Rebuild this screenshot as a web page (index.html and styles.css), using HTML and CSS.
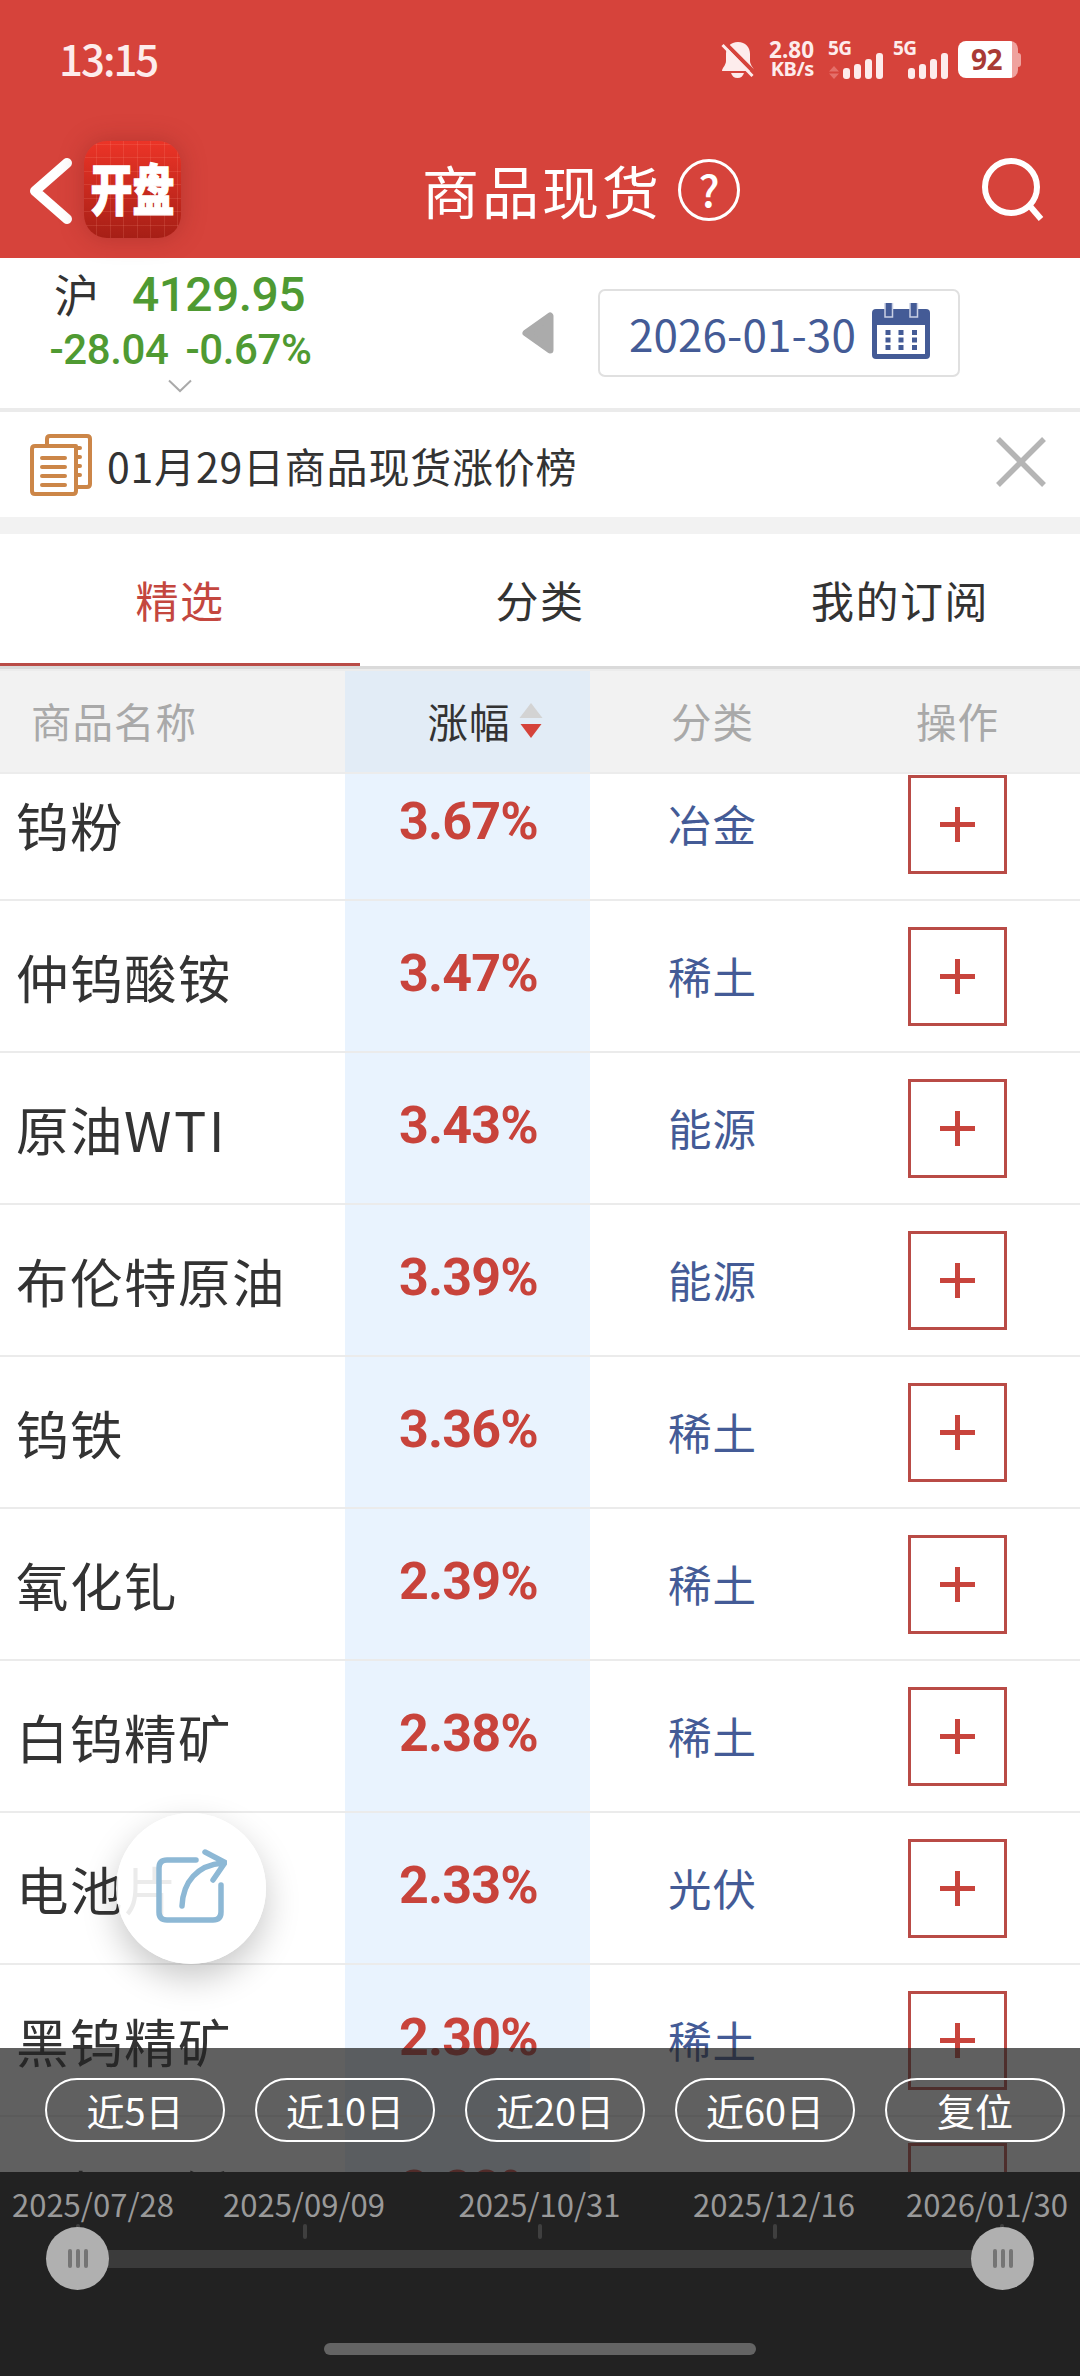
FILE: index.html
```html
<!DOCTYPE html>
<html lang="zh-CN">
<head>
<meta charset="utf-8">
<title>商品现货</title>
<link rel="stylesheet" href="styles.css">
</head>
<body>
<div class="screen">
  <header class="top">
    <div class="status">
      <span class="clock">13:15</span>
      <div class="status-right">
        <svg class="bell" width="34" height="38" viewBox="0 0 34 38"><path d="M17 1C9.500 1 5 6 5 13v7c0 4-4 7-4 10h32c0-3-4-6-4-10v-7C29 6 24.500 1 17 1z" fill="#fdecec"/><path d="M10 32h13c-1 3-3 5-6.500 5S11 35 10 32z" fill="#fdecec"/><path d="M3 1l31 31" stroke="#d6433b" stroke-width="4"/><path d="M1.500 4l30 31" stroke="#fdecec" stroke-width="3"/></svg>
        <div class="rate"><span class="rate-num">2.80</span><span class="rate-unit">KB/s</span></div>
        <div class="signal first"><span class="net">5G</span>
          <svg width="56" height="38" viewBox="0 0 56 38"><path d="M6 25l5 5.500H1zM6 38l5-5.500H1z" fill="#e4706a"/><g fill="#fdecec"><rect x="15" y="27" width="7" height="11" rx="3"/><rect x="26" y="23" width="7" height="15" rx="3"/><rect x="37" y="18" width="7" height="20" rx="3"/><rect x="48" y="12" width="7" height="26" rx="3"/></g></svg></div>
        <div class="signal second"><span class="net">5G</span>
          <svg width="56" height="38" viewBox="0 0 56 38"><g fill="#fdecec"><rect x="15" y="27" width="7" height="11" rx="3"/><rect x="26" y="23" width="7" height="15" rx="3"/><rect x="37" y="18" width="7" height="20" rx="3"/><rect x="48" y="12" width="7" height="26" rx="3"/></g></svg></div>
        <div class="battery"><span class="level">92</span></div>
      </div>
    </div>
    <div class="nav">
      <svg class="back" width="44" height="68" viewBox="0 0 44 68"><path d="M38 6L6 34l32 28" fill="none" stroke="#fff" stroke-width="10" stroke-linecap="round" stroke-linejoin="round"/></svg>
      <div class="app"><span class="app-text">开盘</span></div>
      <h1 class="title">商品现货</h1>
      <span class="help">?</span>
      <svg class="search" width="62" height="66" viewBox="0 0 62 66"><circle cx="29" cy="30" r="26" fill="none" stroke="#fff" stroke-width="6"/><path d="M47 48l12 14" stroke="#fff" stroke-width="6"/></svg>
    </div>
  </header>

  <section class="market">
    <div class="index">
      <div class="index-main"><span class="index-name">沪</span><span class="index-value">4129.95</span></div>
      <div class="index-change"><span>-28.04</span><span>-0.67%</span></div>
      <svg class="chev" width="24" height="14" viewBox="0 0 24 14"><path d="M1 1.500l11 10.500 11-10.500" fill="none" stroke="#aaa" stroke-width="2"/></svg>
    </div>
    <svg class="prev" width="32" height="42" viewBox="0 0 32 42"><path d="M28 4v34L4 21z" fill="#ababab" stroke="#ababab" stroke-width="7" stroke-linejoin="round"/></svg>
    <div class="date">
      <span class="date-text">2026-01-30</span>
      <svg width="58" height="56" viewBox="0 0 58 56"><rect y="6" width="58" height="50" rx="4" fill="#445b96"/><rect x="5" y="22" width="48" height="29" fill="#fff"/><g fill="#445b96" stroke="#c9d0e4" stroke-width="1.500"><rect x="13" y="-2" width="7.500" height="16"/><rect x="38" y="-2" width="7.500" height="16"/></g><g fill="#445b96"><path d="M13.500 27h5v5h-5zM26.500 27h5v5h-5zM40 27h5v5h-5zM13.500 34.500h5v5h-5zM26.500 34.500h5v5h-5zM40 34.500h5v5h-5zM13.500 42h5v5h-5zM26.500 42h5v5h-5zM40 42h5v5h-5z"/></g></svg>
    </div>
  </section>

  <section class="notice">
    <svg width="62" height="62" viewBox="0 0 62 62" fill="none" stroke="#cc8648" stroke-width="4" stroke-linecap="round" stroke-linejoin="round"><path d="M17 10V5q0-3 3-3h37q3 0 3 3v45q0 3-3 3H47"/><path d="M42 12H5q-3 0-3 3v42q0 3 3 3h38q3 0 3-3V12z"/><path d="M12 24h23M12 33h23M12 42h23M12 51h23M47 14h3M47 23h3M47 32h3M47 41h3"/></svg>
    <span class="notice-text">01月29日商品现货涨价榜</span>
    <svg class="close" width="50" height="50" viewBox="0 0 50 50"><path d="M2 2l46 46M48 2L2 48" stroke="#b5b5b5" stroke-width="5.500"/></svg>
  </section>

  <nav class="tabs">
    <span class="tab active">精选</span><span class="tab">分类</span><span class="tab">我的订阅</span>
  </nav>

  <div class="grid head">
    <span class="c-name">商品名称</span>
    <span class="c-rate">涨幅<svg width="24" height="36" viewBox="0 0 24 36"><path d="M12 0l11.500 15H.5z" fill="#d3d3d3"/><path d="M12 35L1.500 21h21z" fill="#d5433a"/></svg></span>
    <span class="c-cat">分类</span>
    <span class="c-op">操作</span>
  </div>

  <main class="list">
    <div class="rows">
      <div class="grid row"><span class="c-name">钨粉</span><span class="c-rate">3.67%</span><span class="c-cat">冶金</span><span class="c-op"><i class="add"></i></span></div>
      <div class="grid row"><span class="c-name">仲钨酸铵</span><span class="c-rate">3.47%</span><span class="c-cat">稀土</span><span class="c-op"><i class="add"></i></span></div>
      <div class="grid row"><span class="c-name">原油<span class="latin">WTI</span></span><span class="c-rate">3.43%</span><span class="c-cat">能源</span><span class="c-op"><i class="add"></i></span></div>
      <div class="grid row"><span class="c-name">布伦特原油</span><span class="c-rate">3.39%</span><span class="c-cat">能源</span><span class="c-op"><i class="add"></i></span></div>
      <div class="grid row"><span class="c-name">钨铁</span><span class="c-rate">3.36%</span><span class="c-cat">稀土</span><span class="c-op"><i class="add"></i></span></div>
      <div class="grid row"><span class="c-name">氧化钆</span><span class="c-rate">2.39%</span><span class="c-cat">稀土</span><span class="c-op"><i class="add"></i></span></div>
      <div class="grid row"><span class="c-name">白钨精矿</span><span class="c-rate">2.38%</span><span class="c-cat">稀土</span><span class="c-op"><i class="add"></i></span></div>
      <div class="grid row"><span class="c-name">电池片</span><span class="c-rate">2.33%</span><span class="c-cat">光伏</span><span class="c-op"><i class="add"></i></span></div>
      <div class="grid row"><span class="c-name">黑钨精矿</span><span class="c-rate">2.30%</span><span class="c-cat">稀土</span><span class="c-op"><i class="add"></i></span></div>
      <div class="grid row"><span class="c-name">瓦楞原纸</span><span class="c-rate">2.28%</span><span class="c-cat"></span><span class="c-op"><i class="add"></i></span></div>
    </div>
  </main>

  <div class="fab"><svg width="72" height="76" viewBox="0 0 72 76" fill="none" stroke="#8db8d5" stroke-width="5.500" stroke-linecap="round" stroke-linejoin="round"><path d="M41 13H12q-8 0-8 8v44q0 8 8 8h46q8 0 8-8V38"/><path d="M27 59C28 35 42 18 68 16M50 5l20 10.500L58 33"/></svg></div>

  <footer class="bottom">
    <div class="ranges"><span class="pill">近5日</span><span class="pill">近10日</span><span class="pill">近20日</span><span class="pill">近60日</span><span class="pill">复位</span></div>
    <div class="timeline">
      <div class="dates"><span>2025/07/28</span><span>2025/09/09</span><span>2025/10/31</span><span>2025/12/16</span><span>2026/01/30</span></div>
      <div class="ticks"><i></i><i></i><i></i><i></i><i></i></div>
      <div class="slider">
        <span class="knob"><i></i><i></i><i></i></span><span class="track"></span><span class="knob"><i></i><i></i><i></i></span>
      </div>
      <div class="home"></div>
    </div>
  </footer>
</div>
</body>
</html>
```
FILE: styles.css
```css
* { box-sizing: border-box; margin: 0; padding: 0; }
body { font-family: "Noto Sans CJK SC", sans-serif; color: #333; background: #fff; }
svg { display: block; flex: none; }
span, h1 { white-space: nowrap; }
.screen { position: relative; width: 1080px; height: 2376px; overflow: hidden; background: #fff; display: flex; flex-direction: column; }
.screen > * { flex: none; }

.top { height: 258px; background: #d6433b; color: #fff; }
.status { height: 120px; padding: 0 59px 0 59px; display: flex; justify-content: space-between; align-items: center; }
.clock { font-size: 42px; font-weight: 500; letter-spacing: -2px; color: #fdecec; line-height: 60px; margin-top: -5px; }
.status-right { display: flex; align-items: flex-start; height: 38px; color: #fdecec; }
.bell { margin-right: 11px; }
.rate { width: 48px; display: flex; flex-direction: column; align-items: flex-end; font-family: "Noto Sans", sans-serif; font-weight: 700; }
.rate-num { font-size: 22.500px; line-height: 17px; }
.rate-unit { font-size: 20px; line-height: 22px; letter-spacing: -.4px; }
.signal { display: grid; width: 56px; }
.signal > * { grid-area: 1 / 1; }
.signal.first { margin-left: 14px; }
.signal.second { margin-left: 9px; }
.net { font: 700 19px/15px "Noto Sans", sans-serif; letter-spacing: -.5px; }
.battery { margin-left: 9px; width: 63px; height: 37px; display: flex; align-items: center; }
.level { width: 60px; height: 37px; flex: none; border-radius: 8px; background: linear-gradient(90deg, #fff 0 54px, #efa29e 54px); color: #a93a35; font: 700 28px/37px "Noto Sans", sans-serif; padding-left: 13px; letter-spacing: -.5px; }
.battery::after { content: ""; width: 3px; height: 14px; background: #efa29e; border-radius: 0 3px 3px 0; }
.nav { height: 138px; display: flex; align-items: center; padding: 2px 36px 0 29px; }
.back { margin-top: 2px; }
.app { width: 97px; height: 97px; margin: 0 0 2px 11px; border-radius: 23px; display: flex; align-items: center; justify-content: center; box-shadow: 0 0 24px rgba(120, 30, 25, .35);
  background: repeating-linear-gradient(90deg, transparent 0 12.500px, rgba(255, 160, 140, .16) 12.500px 13.500px), repeating-linear-gradient(0deg, transparent 0 12.500px, rgba(255, 160, 140, .16) 12.500px 13.500px), linear-gradient(#ec3427, #a61f16); }
.app-text { font-size: 42px; line-height: 56px; font-weight: 900; transform: scaleY(1.3); -webkit-text-stroke: 1px #fff; margin-top: -4px; }
.title { margin-left: 241px; font-size: 57px; line-height: 80px; font-weight: 400; letter-spacing: 3px; margin-top: -3px; }
.help { width: 62px; height: 62px; margin-left: 16px; border: 3.500px solid #fff; border-radius: 50%; font: 500 43px/52px "Noto Sans CJK SC", sans-serif; text-align: center; }
.search { margin-left: auto; }

.market { height: 154px; border-bottom: 4px solid #ebebeb; display: flex; }
.index { width: 360px; display: flex; flex-direction: column; align-items: center; }
.index-main { width: 100%; height: 72px; padding-left: 54px; display: flex; align-items: center; }
.index-name { font-size: 45px; line-height: 60px; width: 78px; }
.index-value { font: 500 48px/60px Roboto, sans-serif; color: #4f9a32; letter-spacing: -.6px; margin-top: 1px; }
.index-change { height: 38px; display: flex; gap: 17px; font: 500 42px/40px Roboto, sans-serif; color: #4f9a32; letter-spacing: -.4px; margin-left: 1px; }
.chev { margin-top: 11px; }
.prev { margin: 54px 0 0 162px; }
.date { width: 362px; height: 88px; margin: 31px 0 0 44px; border: 2px solid #e0e0e0; border-radius: 7px; display: flex; align-items: center; padding-left: 29px; }
.date-text { font-size: 44px; line-height: 60px; color: #445b96; width: 243px; letter-spacing: .1px; }
.date svg { margin-top: -4px; }

.notice { height: 122px; border-bottom: 17px solid #f2f2f2; padding: 0 34px 0 30px; display: flex; align-items: center; }
.notice-text { font-size: 41px; letter-spacing: .8px; line-height: 60px; margin-left: 15px; }
.close { margin-left: auto; margin-top: -6px; }

.tabs { height: 135px; border-bottom: 3px solid #dadada; display: grid; grid-template-columns: repeat(3, 1fr); box-shadow: 0 2px #ececec; position: relative; z-index: 1; }
.tab { height: 132px; display: flex; align-items: center; justify-content: center; font-size: 43px; letter-spacing: 1.500px; padding-bottom: 2px; }
.tab.active { color: #c4473f; border-bottom: 3px solid #b94b46; padding-bottom: 0; }

.grid { display: grid; grid-template-columns: 345px 245px 245px 245px; }
.grid > span { display: flex; align-items: center; justify-content: center; }
.grid > .c-name { justify-content: flex-start; }
.head { height: 105px; background: #f2f2f2; border-bottom: 2px solid #ececec; color: #a9a9a9; font-size: 40.500px; letter-spacing: 1px; }
.head .c-name { padding-left: 31px; }
.head .c-rate { background: #e2ecf6; color: #333; gap: 8px; padding-left: 35px; }
.list { height: 1500px; overflow: hidden; }
.rows { margin-top: -25px; }
.row { height: 152px; border-bottom: 2px solid #ebebeb; }
.row .c-name { font-size: 52.500px; letter-spacing: 1.500px; padding-left: 16px; }
.latin { font-size: 54px; letter-spacing: 2.500px; }
.row .c-rate { background: #e9f3fe; color: #c8433b; font: 700 52px/60px Roboto, sans-serif; letter-spacing: -.8px; padding: 0 0 4px 2px; }
.row .c-cat { font-size: 43.500px; color: #445b96; letter-spacing: 1px; padding-bottom: 1px; }
.add { width: 99px; height: 99px; border: 3px solid #b94b46; background: linear-gradient(#c8443c, #c8443c) center / 35px 5px no-repeat, linear-gradient(#c8443c, #c8443c) center / 5px 35px no-repeat; }

.fab { position: absolute; left: 116px; top: 1813px; width: 150px; height: 151px; border-radius: 50%; background: rgba(255, 255, 255, .9); box-shadow: 0 14px 34px rgba(0, 0, 0, .22); display: flex; align-items: center; justify-content: center; padding-bottom: 8px; }

.bottom { position: absolute; left: 0; right: 0; bottom: 0; height: 328px; }
.ranges { height: 124px; background: rgba(34, 34, 34, .72); display: flex; gap: 30px; padding: 30px 0 0 45px; }
.pill { width: 180px; height: 64px; border: 2px solid #fff; border-radius: 32px; color: #fff; font-size: 38px; display: flex; align-items: center; justify-content: center; padding-bottom: 1px; }
.timeline { height: 204px; background: #222; }
.dates { height: 52px; padding: 0 12px; display: grid; grid-template-columns: 172px 240px 231px 238px 175px; font-size: 31px; line-height: 63px; color: #999; text-align: center; }
.dates span:first-child { text-align: left; }
.dates span:last-child { text-align: right; }
.ticks { height: 15px; padding-left: 76px; display: grid; grid-template-columns: 227px 235px 235px 227px 4px; }
.ticks i { width: 4px; border-radius: 2px; background: #3f3f3f; }
.slider { height: 63px; margin-top: -12px; padding: 0 46px; display: flex; align-items: center; }
.track { flex: 1; height: 18px; background: #3b3b3b; margin: 0 -8px; }
.knob { position: relative; z-index: 1; width: 63px; height: 63px; border-radius: 50%; background: #b0b0b0; display: flex; align-items: center; justify-content: center; gap: 4px; }
.knob i { width: 4px; height: 19px; border-radius: 2px; background: #757575; }
.home { width: 432px; height: 12px; border-radius: 6px; background: #646464; margin: 53px auto 0; }
```
